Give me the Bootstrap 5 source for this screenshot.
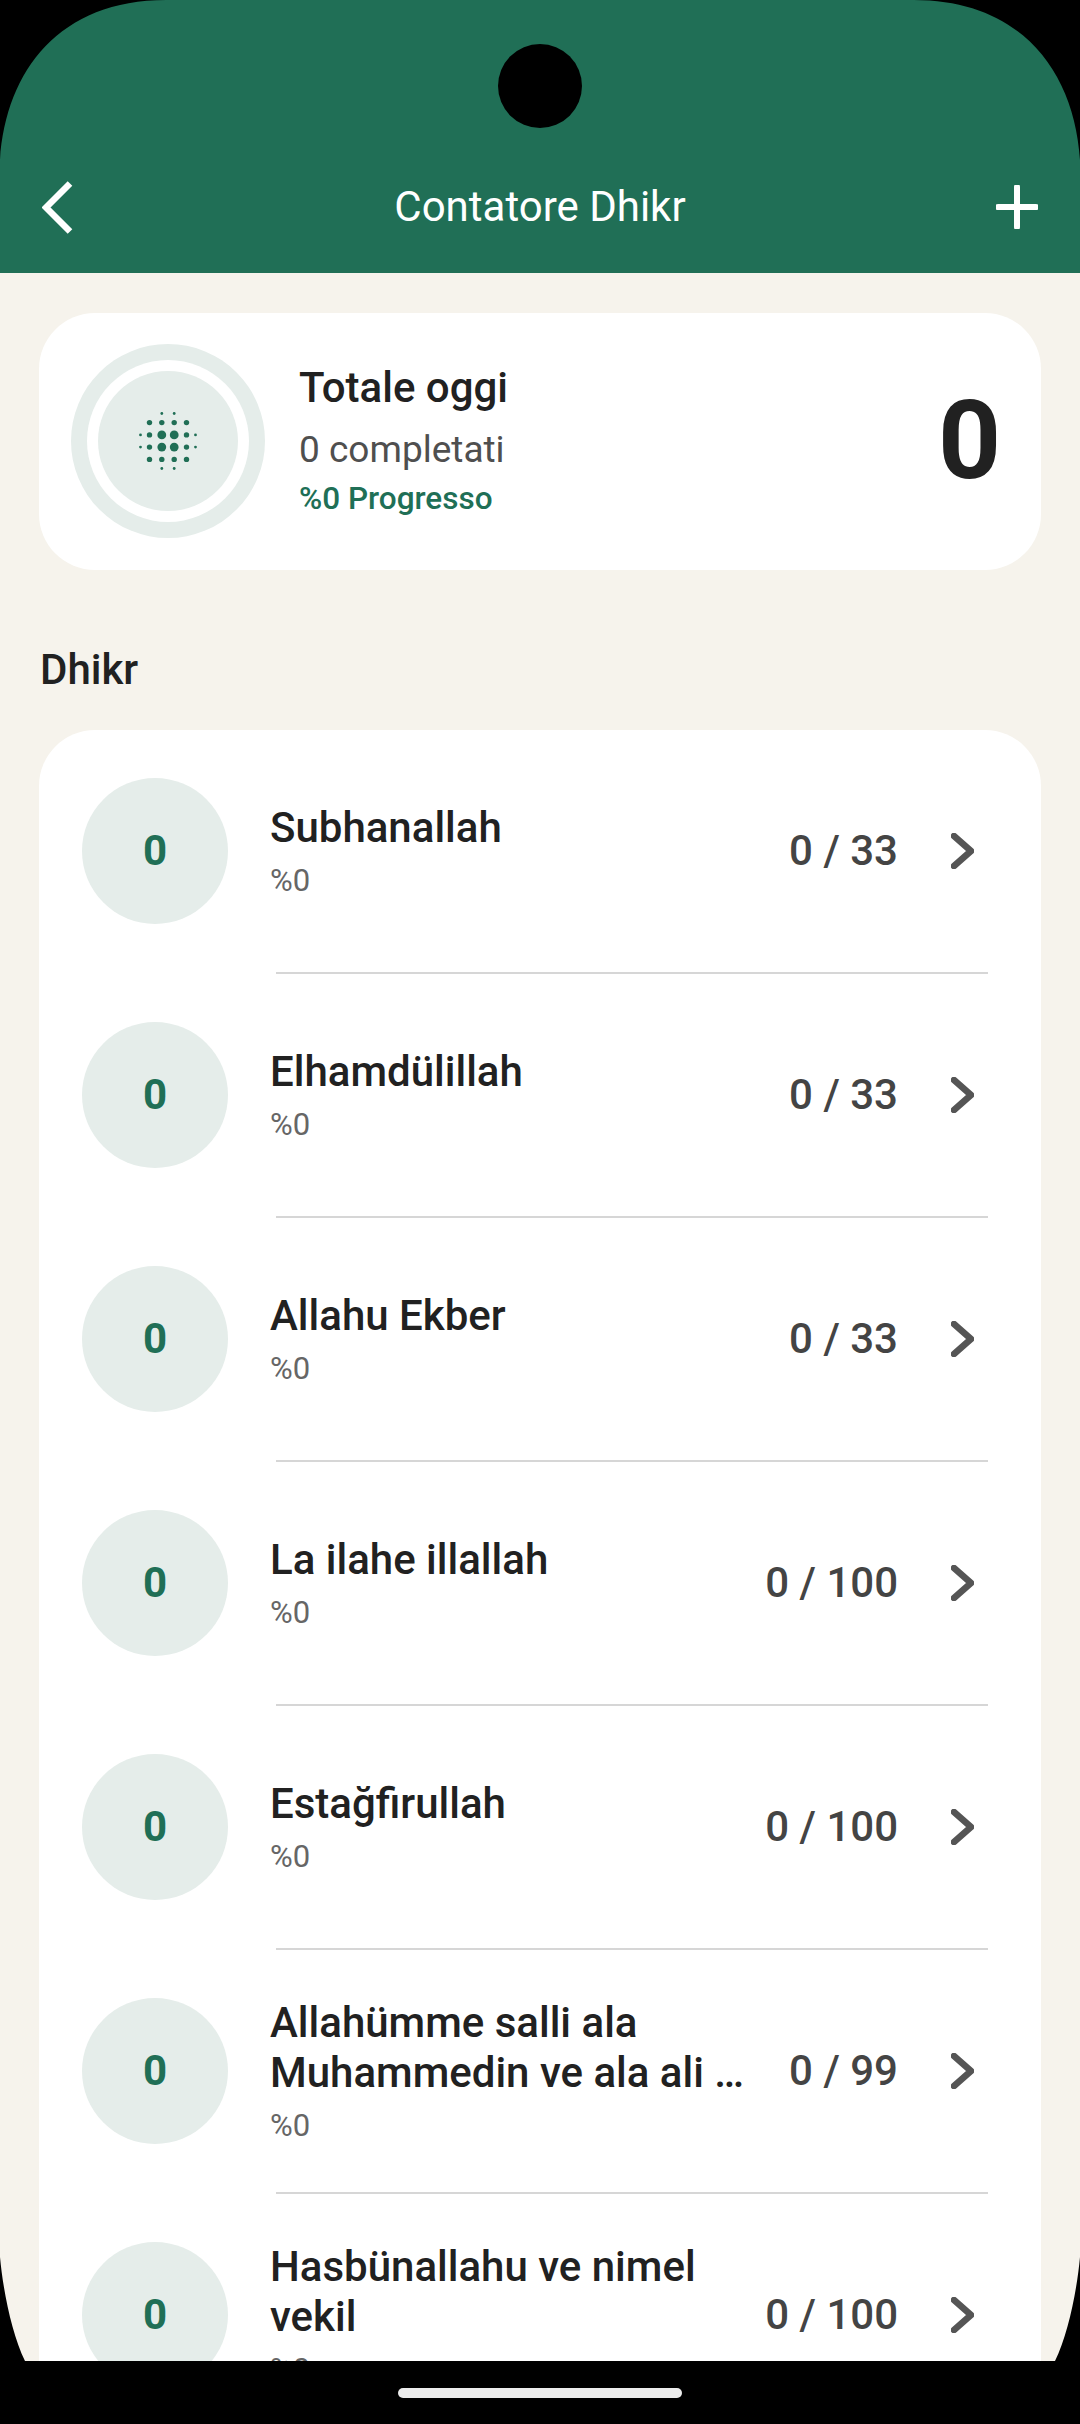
<!DOCTYPE html>
<html lang="it">
<head>
<meta charset="utf-8">
<title>Contatore Dhikr</title>
<link href="https://cdn.jsdelivr.net/npm/bootstrap@5.3.0/dist/css/bootstrap.min.css" rel="stylesheet">
<style>
html,body{margin:0;height:2424px;overflow:hidden;background:#000}
body{font-family:Roboto,"Liberation Sans",sans-serif;color:#212121}
.phone-screen{width:1080px;height:2424px;position:relative;overflow:hidden}
.page-body{background:#f6f3ec;min-height:0}
.app-bar{height:273px;background:#206f56;padding:141px 42px 0}
.app-side{width:42px;height:132px}
.app-title{font-size:42px;line-height:132px;color:#fff}
.sum-card{margin:40px 39px 0;height:257px;border-radius:56px;padding-left:32px;padding-right:40px;padding-bottom:1px}
.ring-outer{width:194px;height:194px;border-radius:50%;background:#e5edea}
.ring-white{width:162px;height:162px;border-radius:50%;background:#fff}
.ring-inner{width:140px;height:140px;border-radius:50%;background:#e5edea}
.sum-text{margin-left:34px}
.sum-title{font-size:42px;line-height:50px;font-weight:500;color:#212121}
.sum-done{font-size:37px;line-height:44px;margin-top:15px;color:#4f4f4f}
.sum-prog{font-size:31.5px;line-height:40px;margin-top:7px;font-weight:500;color:#206f56}
.sum-total{font-size:110px;line-height:1;font-weight:700;color:#212121}
.sec-label{margin:76px 0 0 40px;height:84px;font-size:42px;line-height:48px;font-weight:500;color:#212121}
.list-card{margin:0 39px;border-radius:56px;background:#fff}
.dhikr-row{height:244px;padding:0 0 2px 43px;position:relative}
.dhikr-row+.dhikr-row::before{content:"";position:absolute;top:-2px;left:237px;width:712px;height:2px;background:#d6d6d6}
.num-disc{width:146px;height:146px;border-radius:50%;background:#e5edea;color:#206f56;font-size:42px;font-weight:700;padding-bottom:2px}
.dhikr-text{margin:0 24px 0 42px;min-width:0}
.dhikr-name{font-size:42px;line-height:50px;font-weight:500;color:#212121}
.dhikr-pct{font-size:31px;line-height:38px;margin-top:9px;margin-bottom:-1px;color:#666}
.dhikr-count{font-size:42px;font-weight:500;color:#444;white-space:nowrap;margin-bottom:2px}
.dhikr-chev{margin:0 67px 0 53px;flex:none}
.home-strip{height:63px;background:#000;padding-top:27px}
.home-pill{width:284px;height:10px;border-radius:5px;background:#ececec}
.screen-mask{position:absolute;left:0;top:0;pointer-events:none}
</style>
</head>
<body>
<div class="phone-screen d-flex flex-column">
  <div class="page-body flex-grow-1 overflow-hidden">
    <header class="app-bar d-flex justify-content-between align-items-start">
      <div class="app-side d-flex align-items-center">
        <svg width="31" height="53" viewBox="0 0 31 53"><path d="M28 2.5 4 26.5 28 50.5" fill="none" stroke="#fff" stroke-width="6.5"/></svg>
      </div>
      <div class="app-title">Contatore Dhikr</div>
      <div class="app-side d-flex align-items-center justify-content-end">
        <svg width="42" height="44" viewBox="0 0 42 44"><path d="M21 2V42M2 22H40" fill="none" stroke="#fff" stroke-width="6" stroke-linecap="round"/></svg>
      </div>
    </header>

    <section class="card border-0 sum-card flex-row align-items-center">
      <div class="ring-outer d-flex align-items-center justify-content-center flex-shrink-0">
        <div class="ring-white d-flex align-items-center justify-content-center">
          <div class="ring-inner d-flex align-items-center justify-content-center">
            <svg width="60" height="60" viewBox="-30 -30 60 60" fill="#206f56">
              <circle cx="-6.2" cy="-6.1" r="4.4"/><circle cx="6.2" cy="-6.1" r="4.4"/><circle cx="-6.2" cy="6.1" r="4.4"/><circle cx="6.2" cy="6.1" r="4.4"/>
              <circle cx="-18.5" cy="-18.4" r="2.7"/><circle cx="-6.2" cy="-18.4" r="2.7"/><circle cx="6.2" cy="-18.4" r="2.7"/><circle cx="18.5" cy="-18.4" r="2.7"/>
              <circle cx="-18.5" cy="-6.1" r="2.7"/><circle cx="18.5" cy="-6.1" r="2.7"/><circle cx="-18.5" cy="6.1" r="2.7"/><circle cx="18.5" cy="6.1" r="2.7"/>
              <circle cx="-18.5" cy="18.4" r="2.7"/><circle cx="-6.2" cy="18.4" r="2.7"/><circle cx="6.2" cy="18.4" r="2.7"/><circle cx="18.5" cy="18.4" r="2.7"/>
              <circle cx="-6.2" cy="-27.5" r="1.4"/><circle cx="6.2" cy="-27.5" r="1.4"/><circle cx="-6.2" cy="27.5" r="1.4"/><circle cx="6.2" cy="27.5" r="1.4"/>
              <circle cx="-27.5" cy="-6.1" r="1.4"/><circle cx="-27.5" cy="6.1" r="1.4"/><circle cx="27.5" cy="-6.1" r="1.4"/><circle cx="27.5" cy="6.1" r="1.4"/>
            </svg>
          </div>
        </div>
      </div>
      <div class="sum-text flex-grow-1">
        <div class="sum-title">Totale oggi</div>
        <div class="sum-done">0 completati</div>
        <div class="sum-prog">%0 Progresso</div>
      </div>
      <div class="sum-total">0</div>
    </section>

    <div class="sec-label">Dhikr</div>

    <section class="list-card">
      <div class="dhikr-row d-flex align-items-center">
        <div class="num-disc d-flex align-items-center justify-content-center flex-shrink-0">0</div>
        <div class="dhikr-text flex-grow-1"><div class="dhikr-name">Subhanallah</div><div class="dhikr-pct">%0</div></div>
        <div class="dhikr-count">0 / 33</div>
        <svg class="dhikr-chev" width="23" height="36" viewBox="0 0 23 36"><path d="M3 3 20 18 3 33" fill="none" stroke="#555" stroke-width="6.5" stroke-linecap="round" stroke-linejoin="round"/></svg>
      </div>
      <div class="dhikr-row d-flex align-items-center">
        <div class="num-disc d-flex align-items-center justify-content-center flex-shrink-0">0</div>
        <div class="dhikr-text flex-grow-1"><div class="dhikr-name">Elhamdülillah</div><div class="dhikr-pct">%0</div></div>
        <div class="dhikr-count">0 / 33</div>
        <svg class="dhikr-chev" width="23" height="36" viewBox="0 0 23 36"><path d="M3 3 20 18 3 33" fill="none" stroke="#555" stroke-width="6.5" stroke-linecap="round" stroke-linejoin="round"/></svg>
      </div>
      <div class="dhikr-row d-flex align-items-center">
        <div class="num-disc d-flex align-items-center justify-content-center flex-shrink-0">0</div>
        <div class="dhikr-text flex-grow-1"><div class="dhikr-name">Allahu Ekber</div><div class="dhikr-pct">%0</div></div>
        <div class="dhikr-count">0 / 33</div>
        <svg class="dhikr-chev" width="23" height="36" viewBox="0 0 23 36"><path d="M3 3 20 18 3 33" fill="none" stroke="#555" stroke-width="6.5" stroke-linecap="round" stroke-linejoin="round"/></svg>
      </div>
      <div class="dhikr-row d-flex align-items-center">
        <div class="num-disc d-flex align-items-center justify-content-center flex-shrink-0">0</div>
        <div class="dhikr-text flex-grow-1"><div class="dhikr-name">La ilahe illallah</div><div class="dhikr-pct">%0</div></div>
        <div class="dhikr-count">0 / 100</div>
        <svg class="dhikr-chev" width="23" height="36" viewBox="0 0 23 36"><path d="M3 3 20 18 3 33" fill="none" stroke="#555" stroke-width="6.5" stroke-linecap="round" stroke-linejoin="round"/></svg>
      </div>
      <div class="dhikr-row d-flex align-items-center">
        <div class="num-disc d-flex align-items-center justify-content-center flex-shrink-0">0</div>
        <div class="dhikr-text flex-grow-1"><div class="dhikr-name">Estağfirullah</div><div class="dhikr-pct">%0</div></div>
        <div class="dhikr-count">0 / 100</div>
        <svg class="dhikr-chev" width="23" height="36" viewBox="0 0 23 36"><path d="M3 3 20 18 3 33" fill="none" stroke="#555" stroke-width="6.5" stroke-linecap="round" stroke-linejoin="round"/></svg>
      </div>
      <div class="dhikr-row d-flex align-items-center">
        <div class="num-disc d-flex align-items-center justify-content-center flex-shrink-0">0</div>
        <div class="dhikr-text flex-grow-1"><div class="dhikr-name">Allahümme salli ala Muhammedin ve ala ali …</div><div class="dhikr-pct">%0</div></div>
        <div class="dhikr-count">0 / 99</div>
        <svg class="dhikr-chev" width="23" height="36" viewBox="0 0 23 36"><path d="M3 3 20 18 3 33" fill="none" stroke="#555" stroke-width="6.5" stroke-linecap="round" stroke-linejoin="round"/></svg>
      </div>
      <div class="dhikr-row d-flex align-items-center">
        <div class="num-disc d-flex align-items-center justify-content-center flex-shrink-0">0</div>
        <div class="dhikr-text flex-grow-1"><div class="dhikr-name">Hasbünallahu ve nimel vekil</div><div class="dhikr-pct">%0</div></div>
        <div class="dhikr-count">0 / 100</div>
        <svg class="dhikr-chev" width="23" height="36" viewBox="0 0 23 36"><path d="M3 3 20 18 3 33" fill="none" stroke="#555" stroke-width="6.5" stroke-linecap="round" stroke-linejoin="round"/></svg>
      </div>
    </section>
  </div>
  <div class="home-strip flex-shrink-0"><div class="home-pill mx-auto"></div></div>
  <svg class="screen-mask" width="1080" height="2424" viewBox="0 0 1080 2424" fill="#000">
    <circle cx="540" cy="86" r="42"/>
    <path d="M0 0H166C60 0 6 70 0 160Z"/>
    <path d="M1080 0H914C1020 0 1074 70 1080 160Z"/>
    <path d="M0 2257C3 2290 12 2335 25 2361H0Z"/>
    <path d="M1080 2257C1077 2290 1068 2335 1055 2361H1080Z"/>
  </svg>
</div>
<script src="https://cdn.jsdelivr.net/npm/bootstrap@5.3.0/dist/js/bootstrap.bundle.min.js"></script>
</body>
</html>
